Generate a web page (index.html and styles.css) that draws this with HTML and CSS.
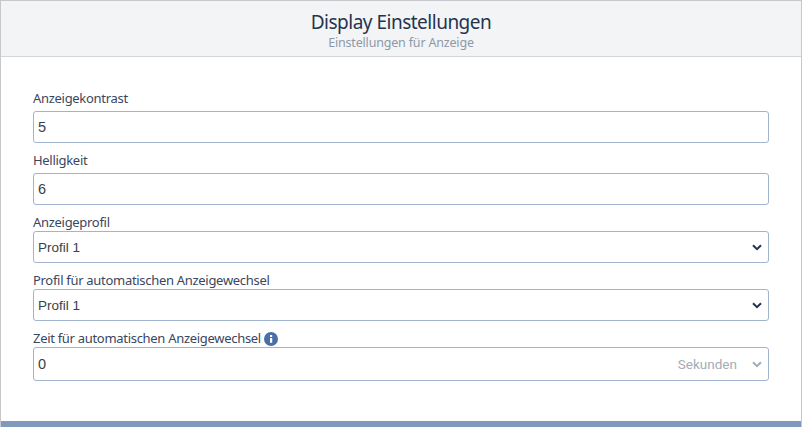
FILE: index.html
```html
<!DOCTYPE html>
<html lang="de">
<head>
<meta charset="utf-8">
<title>Display Einstellungen</title>
<link rel="stylesheet" href="styles.css">
</head>
<body>
<div class="panel">
  <header class="head">
    <h1 class="title">Display Einstellungen</h1>
    <p class="subtitle">Einstellungen für Anzeige</p>
  </header>
  <main class="form">
    <div class="field field-input">
      <label class="label">Anzeigekontrast</label>
      <div class="control control-input"><span class="value">5</span></div>
    </div>
    <div class="field field-input">
      <label class="label">Helligkeit</label>
      <div class="control control-input"><span class="value">6</span></div>
    </div>
    <div class="field">
      <label class="label">Anzeigeprofil</label>
      <div class="control"><span class="value">Profil 1</span>
        <svg class="chev" viewBox="0 0 10 7"><path d="M1 1.2 5 5.2 9 1.2" /></svg></div>
    </div>
    <div class="field">
      <label class="label">Profil für automatischen Anzeigewechsel</label>
      <div class="control"><span class="value">Profil 1</span>
        <svg class="chev" viewBox="0 0 10 7"><path d="M1 1.2 5 5.2 9 1.2" /></svg></div>
    </div>
    <div class="field">
      <label class="label">Zeit für automatischen Anzeigewechsel
        <svg class="info" viewBox="0 0 14 14"><circle cx="7" cy="7" r="7" /><rect class="info-mark" x="6" y="6" width="2.2" height="4.8" /><rect class="info-mark" x="6" y="3" width="2.2" height="2" /></svg>
      </label>
      <div class="control control-time"><span class="value value-large">0</span><span class="unit">Sekunden</span>
        <svg class="chev chev-muted" viewBox="0 0 10 7"><path d="M1 1.2 5 5.2 9 1.2" /></svg></div>
    </div>
  </main>
</div>
</body>
</html>
```
FILE: styles.css
```css
* { box-sizing: border-box; }
html, body { margin: 0; height: 100%; background: #fff; overflow: hidden; }
.panel {
  height: 427px;
  display: flex;
  flex-direction: column;
  border: 1px solid #c6c8cc;
  border-width: 1px 1px 0 1px;
  font-family: "Noto Sans", sans-serif;
  color: #2d3a55;
  position: relative;
}
.panel::after {
  content: "";
  position: absolute;
  left: 0;
  right: 0;
  bottom: 0;
  height: 6px;
  background: #7f9abd;
}
.head {
  height: 56px;
  background: #f3f4f6;
  border-bottom: 1px solid #d3d5d9;
  text-align: center;
  padding-top: 10px;
}
.title { margin: 0; font-size: 19px; line-height: 23px; font-weight: 400; letter-spacing: -0.5px; color: #24344f; }
.subtitle { margin: 1px 0 0; font-size: 12.5px; line-height: 16px; letter-spacing: -0.18px; color: #8d99a8; }
.form { padding: 33px 32px 0; display: flex; flex-direction: column; }
.field { display: flex; flex-direction: column; margin-bottom: 9px; }
.label { font-size: 13px; line-height: 16px; height: 17px; letter-spacing: -0.3px; color: #3a465e; white-space: nowrap; }
.field-input .label { height: 21px; }
.control {
  height: 32px;
  display: flex;
  align-items: center;
  border: 1px solid #a0b4d0;
  border-radius: 3px;
  padding: 0 4px;
  background: #fff;
  font-family: "Liberation Sans", sans-serif;
  font-size: 13.5px;
  color: #3a3f47;
}
.control-input, .value-large { font-size: 14.5px; }
.control-time { height: 34px; }
.value { flex: 1; }
.unit { color: #a4acb8; margin-right: 15px; font-family: Roboto, sans-serif; }
.chev { width: 10px; height: 7px; margin-right: 2px; }
.chev path { fill: none; stroke: #24344f; stroke-width: 2; }
.chev-muted path { stroke: #a4acb8; }
.info { width: 14px; height: 14px; vertical-align: -3px; }
.info circle { fill: #4a6ea5; }
.info-mark { fill: #fff; }
```
